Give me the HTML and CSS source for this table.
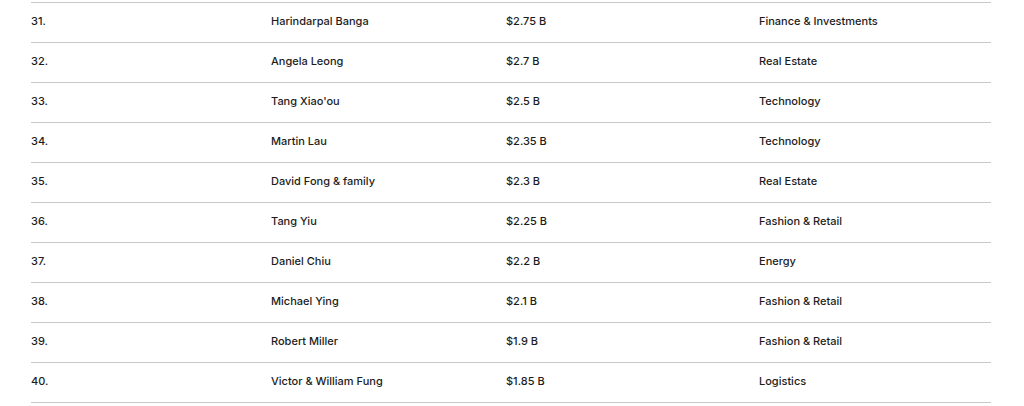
FILE: index.html
```html
<!DOCTYPE html>
<html lang="en">
<head>
<meta charset="utf-8">
<title>Richest list</title>
<link rel="stylesheet" href="styles.css">
</head>
<body>
<div class="list">
  <div class="row"><span>31.</span><span>Harindarpal Banga</span><span>$2.75 B</span><span>Finance &amp; Investments</span></div>
  <div class="row"><span>32.</span><span>Angela Leong</span><span>$2.7 B</span><span>Real Estate</span></div>
  <div class="row"><span>33.</span><span>Tang Xiao'ou</span><span>$2.5 B</span><span>Technology</span></div>
  <div class="row"><span>34.</span><span>Martin Lau</span><span>$2.35 B</span><span>Technology</span></div>
  <div class="row"><span>35.</span><span>David Fong &amp; family</span><span>$2.3 B</span><span>Real Estate</span></div>
  <div class="row"><span>36.</span><span>Tang Yiu</span><span>$2.25 B</span><span>Fashion &amp; Retail</span></div>
  <div class="row"><span>37.</span><span>Daniel Chiu</span><span>$2.2 B</span><span>Energy</span></div>
  <div class="row"><span>38.</span><span>Michael Ying</span><span>$2.1 B</span><span>Fashion &amp; Retail</span></div>
  <div class="row"><span>39.</span><span>Robert Miller</span><span>$1.9 B</span><span>Fashion &amp; Retail</span></div>
  <div class="row"><span>40.</span><span>Victor &amp; William Fung</span><span>$1.85 B</span><span>Logistics</span></div>
</div>
</body>
</html>
```
FILE: styles.css
```css
html, body {
  margin: 0;
  padding: 0;
  background: #ffffff;
}
body {
  font-family: "Inter", "Noto Sans", sans-serif;
  font-size: 11px;
  font-weight: 500;
  color: #1c1c1c;
}
.list {
  width: 960px;
  margin: 2px 0 0 31px;
  border-bottom: 1px solid #c8c8c8;
}
.row {
  display: grid;
  grid-template-columns: 240px 235px 253px 1fr;
  align-items: center;
  height: 36px;
  padding-bottom: 3px;
  border-top: 1px solid #c8c8c8;
}
```
